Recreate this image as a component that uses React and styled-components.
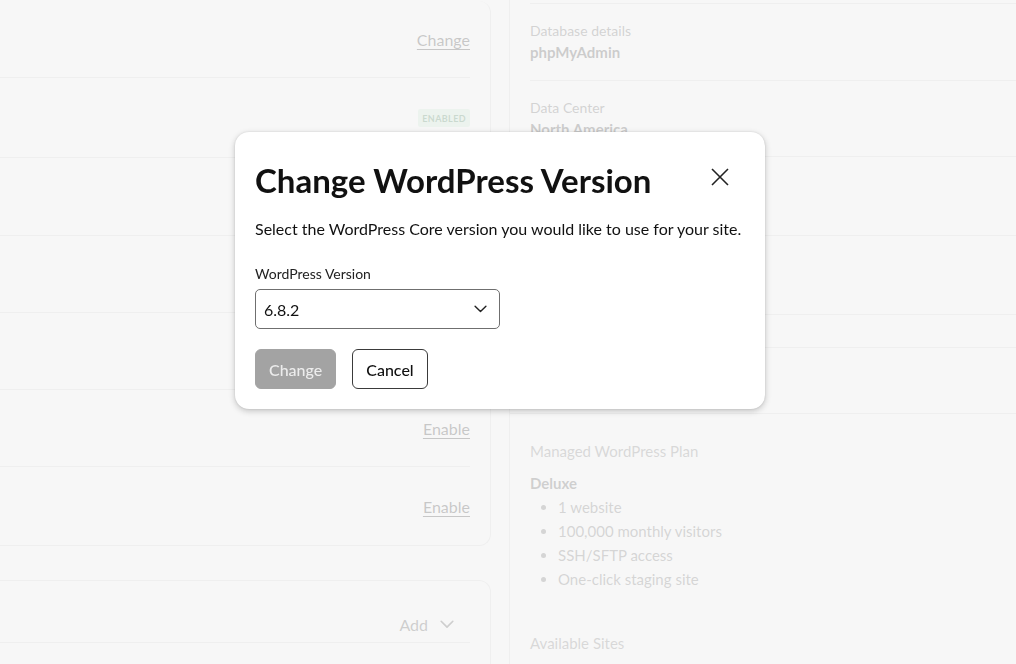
import React from 'react';
import styled, { createGlobalStyle } from 'styled-components';

const GlobalStyle = createGlobalStyle`
  html, body {
    margin: 0;
    padding: 0;
    background: #ffffff;
    font-family: Lato, "Open Sans", Arial, sans-serif;
    color: #111111;
    overflow: hidden;
  }
`;

const Page = styled.div`
  display: grid;
  grid-template-columns: 491px 1fr;
  column-gap: 18px;
  width: 1016px;
  height: 664px;
  overflow: hidden;
`;

const LeftColumn = styled.div`
  display: flex;
  flex-direction: column;
  gap: 34px;
  padding-top: 1px;
`;

const Card = styled.div`
  background: #ffffff;
  border: 1px solid #d6d6d6;
  border-left: 0;
  border-top-width: ${(p) => (p.$open ? 0 : 1)}px;
  border-radius: 0 12px 12px 0;
`;

const SettingRow = styled.div`
  box-sizing: border-box;
  display: flex;
  align-items: center;
  justify-content: flex-end;
  height: ${(p) => p.$h || 77}px;
  padding-top: ${(p) => p.$pt || 0}px;
  margin-right: 20px;
  border-bottom: ${(p) => (p.$last ? '0' : '1px solid #d6d6d6')};
`;

const TextLink = styled.a`
  font-size: 16px;
  color: #111;
  text-decoration: underline;
  text-underline-offset: 3px;
`;

const Badge = styled.span`
  background: #c9ebd2;
  color: #1f6b37;
  font-size: 9px;
  font-weight: 700;
  letter-spacing: 0.4px;
  padding: 4px 4px 3px;
  border-radius: 2px;
`;

const AddButton = styled.span`
  display: flex;
  align-items: center;
  gap: 12px;
  font-size: 16px;
  color: #333;
  margin-right: 16px;
`;

const RightCard = styled.div`
  background: #ffffff;
  border-left: 1px solid #d6d6d6;
  display: flex;
  flex-direction: column;
`;

const InfoRow = styled.div`
  margin-left: 20px;
  height: ${(p) => p.$h}px;
  border-bottom: ${(p) => (p.$line ? '1px solid #d6d6d6' : '0')};
  display: flex;
  flex-direction: column;
  justify-content: ${(p) => (p.$top ? 'flex-start' : 'center')};
  padding-top: ${(p) => p.$pt || 0}px;
  box-sizing: border-box;
`;

const InfoLabel = styled.div`
  font-size: 14px;
  line-height: 20px;
  color: #4a4a4a;
`;

const InfoValue = styled.div`
  font-size: 15px;
  line-height: 22px;
  font-weight: 700;
  color: #2a2a2a;
`;

const PlanSection = styled.div`
  border-top: 1px solid #d6d6d6;
  padding: 26px 20px 0;
`;

const PlanTitle = styled.div`
  font-size: 15px;
  line-height: 22px;
  color: #666;
  margin-bottom: 10px;
`;

const PlanName = styled.div`
  font-size: 15px;
  font-weight: 700;
  line-height: 22px;
  color: #3a3a3a;
`;

const PlanList = styled.ul`
  margin: 1px 0 0;
  padding-left: 28px;
  font-size: 15px;
  line-height: 24px;
  color: #555;
`;

const SitesTitle = styled.div`
  font-size: 15px;
  line-height: 22px;
  color: #666;
  margin-top: 41px;
`;

const Backdrop = styled.div`
  position: fixed;
  inset: 0;
  background: rgba(245, 245, 245, 0.8);
`;

const Modal = styled.div`
  box-sizing: border-box;
  width: 530px;
  height: 277px;
  margin: 132px 0 0 235px;
  padding: 28px 20px 20px;
  background: #ffffff;
  border-radius: 14px;
  box-shadow: 0 2px 6px rgba(0, 0, 0, 0.22), 0 0 2px rgba(0, 0, 0, 0.12);
`;

const ModalHeader = styled.div`
  display: flex;
  justify-content: space-between;
  align-items: center;
`;

const ModalTitle = styled.h2`
  margin: 0;
  font-size: 33px;
  line-height: 40px;
  font-weight: 700;
  color: #111;
`;

const CloseButton = styled.button`
  width: 40px;
  height: 40px;
  margin: -7px 5px 0 0;
  border: 0;
  background: transparent;
  padding: 0;
  display: flex;
  align-items: center;
  justify-content: center;
`;

const Description = styled.p`
  margin: 17px 0 0;
  font-size: 16px;
  line-height: 24px;
  color: #111;
`;

const FieldLabel = styled.div`
  margin-top: 23px;
  font-size: 14px;
  line-height: 20px;
  color: #222;
`;

const SelectBox = styled.div`
  box-sizing: border-box;
  margin-top: 5px;
  width: 245px;
  height: 40px;
  border: 1px solid #6f6f6f;
  border-radius: 5px;
  padding: 0 12px 0 8px;
  display: flex;
  align-items: center;
  justify-content: space-between;
  font-size: 16px;
  color: #111;
`;

const Actions = styled.div`
  display: flex;
  gap: 16px;
  margin-top: 20px;
`;

const Button = styled.button`
  box-sizing: border-box;
  height: 40px;
  padding: 0 13px;
  font-family: inherit;
  font-size: 16px;
  font-weight: 500;
  border-radius: 6px;
  border: 1px solid ${(p) => (p.$primary ? '#a3a3a3' : '#3a3a3a')};
  background: ${(p) => (p.$primary ? '#a3a3a3' : '#ffffff')};
  color: ${(p) => (p.$primary ? '#ececec' : '#111')};
`;

const Chevron = ({ size = 12, color = '#222', width = 1.3 }) => (
  <svg width={size} height={size * 0.6} viewBox="0 0 12 7" fill="none">
    <path d="M1 1l5 5 5-5" stroke={color} strokeWidth={width} strokeLinecap="round" strokeLinejoin="round" />
  </svg>
);

const App = () => (
  <>
    <GlobalStyle />
    <Page>
      <LeftColumn>
        <Card $open>
          <SettingRow $h={77}><TextLink>Change</TextLink></SettingRow>
          <SettingRow $h={80}><Badge>ENABLED</Badge></SettingRow>
          <SettingRow $h={78} />
          <SettingRow $h={77} />
          <SettingRow $h={77} />
          <SettingRow $h={77}><TextLink>Enable</TextLink></SettingRow>
          <SettingRow $h={78} $last><TextLink>Enable</TextLink></SettingRow>
        </Card>
        <Card>
          <SettingRow $h={62} $pt={26}>
            <AddButton>Add <Chevron size={14} color="#333" width={1.4} /></AddButton>
          </SettingRow>
          <SettingRow $h={40} $last />
        </Card>
      </LeftColumn>
      <RightCard>
        <InfoRow $h={4} $line />
        <InfoRow $h={77} $line $top $pt={17}>
          <InfoLabel>Database details</InfoLabel>
          <InfoValue>phpMyAdmin</InfoValue>
        </InfoRow>
        <InfoRow $h={76} $line $top $pt={17}>
          <InfoLabel>Data Center</InfoLabel>
          <InfoValue>North America</InfoValue>
        </InfoRow>
        <InfoRow $h={79} $line />
        <InfoRow $h={79} $line />
        <InfoRow $h={33} $line />
        <InfoRow $h={65} />
        <PlanSection>
          <PlanTitle>Managed WordPress Plan</PlanTitle>
          <PlanName>Deluxe</PlanName>
          <PlanList>
            <li>1 website</li>
            <li>100,000 monthly visitors</li>
            <li>SSH/SFTP access</li>
            <li>One-click staging site</li>
          </PlanList>
          <SitesTitle>Available Sites</SitesTitle>
        </PlanSection>
      </RightCard>
    </Page>
    <Backdrop>
      <Modal role="dialog">
        <ModalHeader>
          <ModalTitle>Change WordPress Version</ModalTitle>
          <CloseButton aria-label="Close">
            <svg width="18" height="18" viewBox="0 0 18 18" fill="none">
              <path d="M1 1l16 16M17 1L1 17" stroke="#222" strokeWidth="1.6" />
            </svg>
          </CloseButton>
        </ModalHeader>
        <Description>Select the WordPress Core version you would like to use for your site.</Description>
        <FieldLabel>WordPress Version</FieldLabel>
        <SelectBox>
          <span>6.8.2</span>
          <Chevron size={13} />
        </SelectBox>
        <Actions>
          <Button $primary>Change</Button>
          <Button>Cancel</Button>
        </Actions>
      </Modal>
    </Backdrop>
  </>
);

export default App;
